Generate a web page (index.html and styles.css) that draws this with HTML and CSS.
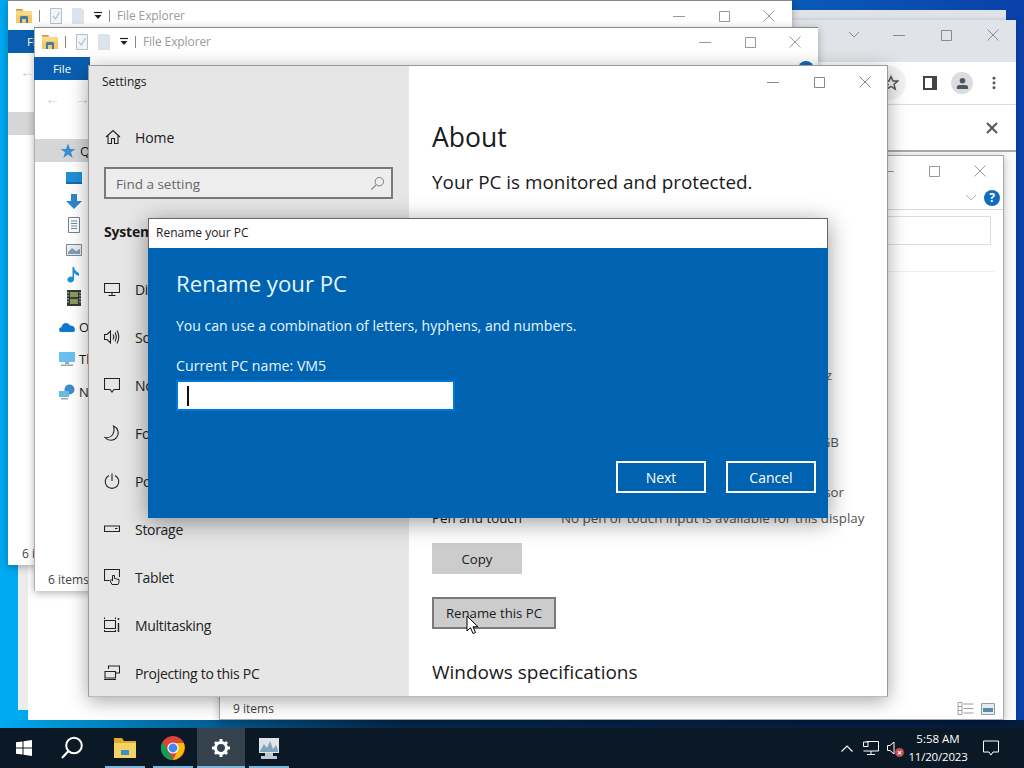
FILE: index.html
```html
<!DOCTYPE html>
<html lang="en">
<head>
<meta charset="utf-8">
<title>Rename your PC</title>
<link rel="stylesheet" href="styles.css">
</head>
<body>
<svg class="sprites" aria-hidden="true">
  <symbol id="i-min" viewBox="0 0 12 12"><path d="M0 6.500H12" fill="none" stroke="currentColor"/></symbol>
  <symbol id="i-max" viewBox="0 0 12 12"><path d="M1.500 1.500H11.500V11.500H1.500Z" fill="none" stroke="currentColor"/></symbol>
  <symbol id="i-close" viewBox="0 0 12 12"><path d="M.5.500L11.500 11.500M11.500.5L.5 11.500" fill="none" stroke="currentColor"/></symbol>
  <symbol id="i-folder" viewBox="0 0 16 16"><path d="M0 1H6L8 3H16V15H0Z" fill="#f3c969"/><path d="M0 1H6L7 2.500H0Z" fill="#c9994a"/><path d="M0 3H16V7H0Z" fill="#f7d98c"/><path d="M4 15V9.500Q4 8 5.500 8H10.500Q12 8 12 9.500V15H10V11H6V15Z" fill="#3f7aa8"/></symbol>
  <symbol id="i-doc" viewBox="0 0 12 16"><path d="M.5.500H11.500V15.500H.5Z" fill="#f2f5f8" stroke="#b7c0c9"/><path d="M3 8L5.500 11L9.500 4" fill="none" stroke="#b7c0c9" stroke-width="1.200"/></symbol>
  <symbol id="i-blank" viewBox="0 0 14 16"><path d="M0 0H10V1H12V16H0Z" fill="#dde3ea"/></symbol>
  <symbol id="i-drop" viewBox="0 0 10 10"><path d="M1 1.500H9" stroke="#222" stroke-width="1.200"/><path d="M1.500 4H8.500L5 8Z" fill="#222"/></symbol>
  <symbol id="i-home" viewBox="0 0 16 16"><path d="M1 8L8 1.500L15 8M3 6.500V14.500H6.500V9.500H9.500V14.500H13V6.500" fill="none" stroke="#222" stroke-width="1.100"/></symbol>
  <symbol id="i-display" viewBox="0 0 16 16"><path d="M.5 2.500H15.500V11.500H.5ZM8 11.500V14.500M4.500 14.500H11.500" fill="none" stroke="#222" stroke-width="1.100"/></symbol>
  <symbol id="i-sound" viewBox="0 0 16 16"><path d="M.5 5.500H3L6.500 2V14L3 10.500H.5ZM9 5.500Q10.500 8 9 10.500M11 3.500Q13.500 8 11 12.500M13 1.500Q16.500 8 13 14.500" fill="none" stroke="#222" stroke-width="1.100"/></symbol>
  <symbol id="i-notif" viewBox="0 0 16 16"><path d="M.5 1.500H15.500V12.500H10L8 15L6 12.500H.5Z" fill="none" stroke="#222" stroke-width="1.100"/></symbol>
  <symbol id="i-moon" viewBox="0 0 16 16"><path d="M9.500 1A7.400 7.400 0 1 1 1 12.500Q5.500 13.500 8.500 10Q11 6 9.500 1Z" fill="none" stroke="#222" stroke-width="1.100"/></symbol>
  <symbol id="i-power" viewBox="0 0 16 16"><path d="M5 2.500A6.800 6.800 0 1 0 11 2.500M8 .5V8" fill="none" stroke="#222" stroke-width="1.100"/></symbol>
  <symbol id="i-storage" viewBox="0 0 16 16"><path d="M.5 5H15.500V10.500H.5Z" fill="none" stroke="#222" stroke-width="1.200"/><path d="M11 7.500H13.500" stroke="#222"/></symbol>
  <symbol id="i-tablet" viewBox="0 0 16 16"><path d="M5.500 11.500H.5V.5H15.500V8" fill="none" stroke="#222" stroke-width="1.100"/><path d="M8 15.500L6 11.500L7 10.500L8.500 12V6.500H10.500V9.500L15 10.500V13.500L14 15.500Z" fill="#e6e6e6" stroke="#222"/></symbol>
  <symbol id="i-multi" viewBox="0 0 16 16"><path d="M.5 3.500H11.500V11.500H.5ZM.5.500V2M11.500.5V2M.5 13V15M11.500 13V15M.5 14.500H11.500" fill="none" stroke="#222" stroke-width="1.100"/><path d="M14.500 1V3M14.500 6V15" stroke="#222" stroke-width="1.400"/></symbol>
  <symbol id="i-project" viewBox="0 0 16 16"><path d="M4.500 4V1H15.500V8H12M1 6.500H11.500V13H1ZM0 14.500H12" fill="none" stroke="#222" stroke-width="1.100"/></symbol>
</svg>

<main class="desktop">
  <div class="win win-back-top"></div>
  <div class="win win-strip"></div>
  <div class="win win-white"></div>

  <!-- Chrome -->
  <section class="win chrome">
    <div class="chrome-title">
      <svg class="chev" viewBox="0 0 12 8"><path d="M1 1L6 6L11 1" fill="none" stroke="#8a8a8a"/></svg>
      <div class="ctrls ctrls-chrome">
        <svg><use href="#i-min"/></svg><svg><use href="#i-max"/></svg><svg><use href="#i-close"/></svg>
      </div>
    </div>
    <div class="chrome-bar">
      <span class="star-wrap"><svg viewBox="0 0 16 16"><path d="M8 1.500L10 6H14.800L11 9.200L12.300 14.200L8 11.500L3.700 14.200L5 9.200L1.200 6H6Z" fill="none" stroke="#555" stroke-width="1.400"/></svg></span>
      <svg class="panel" viewBox="0 0 14 14"><path d="M1 1H13V13H1Z" fill="none" stroke="#444" stroke-width="2"/><path d="M9 1H13V13H9Z" fill="#444"/></svg>
      <span class="avatar"><svg viewBox="0 0 14 14"><circle cx="7" cy="4" r="3" fill="#4c5560"/><path d="M1 13V11Q1 8.500 4 8.500H10Q13 8.500 13 11V13Z" fill="#4c5560"/></svg></span>
      <svg class="dots" viewBox="0 0 4 16"><circle cx="2" cy="2.500" r="1.700" fill="#555"/><circle cx="2" cy="8" r="1.700" fill="#555"/><circle cx="2" cy="13.500" r="1.700" fill="#555"/></svg>
    </div>
    <div class="chrome-row">
      <svg viewBox="0 0 12 12"><path d="M1 1L11 11M11 1L1 11" stroke="#555" stroke-width="2"/></svg>
    </div>
  </section>

  <!-- Explorer with nine items -->
  <section class="win nine">
    <div class="nine-title">
      <div class="ctrls ctrls-nine">
        <svg><use href="#i-min"/></svg><svg><use href="#i-max"/></svg><svg><use href="#i-close"/></svg>
      </div>
    </div>
    <div class="nine-tabs">
      <svg class="chev" viewBox="0 0 12 8"><path d="M1 1L6 6L11 1" fill="none" stroke="#aaa"/></svg>
      <span class="help">?</span>
    </div>
    <div class="nine-search"><span class="nine-field"></span></div>
    <div class="nine-body"></div>
    <footer class="nine-status">
      <span>9 items</span>
      <span class="views">
        <svg viewBox="0 0 16 14"><path d="M.5.500H4.500V4.500H.5ZM.5 4.500H4.500V8.500H.5ZM.5 8.500H4.500V12.500H.5ZM6 2H16M6 6.500H16M6 11H16" fill="none" stroke="#9aa0a6"/></svg>
        <svg viewBox="0 0 14 12"><path d="M.5.500H13.500V11.500H.5Z" fill="#e4ecf2" stroke="#8fa0ad"/><path d="M2 5H12V9H2Z" fill="#5d8aa6"/></svg>
      </span>
    </footer>
  </section>

  <!-- Explorer 1 -->
  <section class="win explorer ex-one">
    <header class="ex-title">
      <svg class="q-folder"><use href="#i-folder"/></svg><i class="sep"></i>
      <svg class="q-doc"><use href="#i-doc"/></svg>
      <svg class="q-blank"><use href="#i-blank"/></svg>
      <svg class="q-drop"><use href="#i-drop"/></svg><i class="sep"></i>
      <span class="ex-name">File Explorer</span>
      <div class="ctrls ctrls-ex">
        <svg><use href="#i-min"/></svg><svg><use href="#i-max"/></svg><svg><use href="#i-close"/></svg>
      </div>
    </header>
    <div class="ribbon"><span class="file-tab">File</span></div>
    <div class="ex-nav"><span class="arrow">←</span></div>
    <div class="ex-hl"></div>
    <footer class="ex-status">6 items</footer>
  </section>

  <!-- Explorer 2 -->
  <section class="win explorer ex-two">
    <header class="ex-title">
      <svg class="q-folder"><use href="#i-folder"/></svg><i class="sep"></i>
      <svg class="q-doc"><use href="#i-doc"/></svg>
      <svg class="q-blank"><use href="#i-blank"/></svg>
      <svg class="q-drop"><use href="#i-drop"/></svg><i class="sep"></i>
      <span class="ex-name">File Explorer</span>
      <div class="ctrls ctrls-ex">
        <svg><use href="#i-min"/></svg><svg><use href="#i-max"/></svg><svg><use href="#i-close"/></svg>
      </div>
    </header>
    <div class="ribbon"><span class="file-tab">File</span><span class="help help-two"></span></div>
    <div class="ex-nav"><span class="arrow">←</span><span class="arrow">→</span></div>
    <ul class="tree">
      <li class="tree-row tree-active"><svg class="t-star" viewBox="0 0 16 16"><path d="M8 .5L10 6H15.500L11 9.300L12.700 15L8 11.500L3.300 15L5 9.300L.5 6H6Z" fill="#3a8fd0"/></svg><span>Quick access</span></li>
      <li class="tree-sub t-1"><svg viewBox="0 0 16 14"><path d="M0 1H16V13H0Z" fill="#1f8fd8"/><path d="M0 11H16V13H0Z" fill="#156aa8"/></svg></li>
      <li class="tree-sub t-2"><svg viewBox="0 0 16 16"><path d="M5 0H11V7H16L8 15L0 7H5Z" fill="#2f86c8"/></svg></li>
      <li class="tree-sub t-3"><svg viewBox="0 0 12 16"><path d="M.5.500H11.500V15.500H.5Z" fill="#fff" stroke="#77808a"/><path d="M3 4H9M3 6.500H9M3 9H9M3 11.500H9" stroke="#5b8fb0"/></svg></li>
      <li class="tree-sub t-4"><svg viewBox="0 0 16 12"><path d="M.5.500H15.500V11.500H.5Z" fill="#e8eef3" stroke="#7c8a96"/><path d="M2 8L6 4L10 7L14 5V10H2Z" fill="#7e9db5"/></svg></li>
      <li class="tree-sub t-5"><svg viewBox="0 0 12 16"><path d="M4.500 0H6Q6.500 4 11 6V9Q8 8 6 6V12.500A3.300 3 0 1 1 4.500 10Z" fill="#1b8fe0"/></svg></li>
      <li class="tree-sub t-6"><svg viewBox="0 0 14 16"><path d="M0 0H14V16H0Z" fill="#33383d"/><path d="M3 2H11V14H3Z" fill="#8b9a55"/><path d="M3 7H11V9H3Z" fill="#384048"/><path d="M1 2V14M13 2V14" stroke="#ddd" stroke-dasharray="1.500 1.500"/></svg></li>
      <li class="tree-row t-od"><svg viewBox="0 0 16 10"><path d="M2 10Q0 10 0 7.500Q0 5.500 2.500 5Q3.500 1 7 1Q10 1 11 3.500Q15.500 3.500 16 7.500Q16 10 14 10Z" fill="#0f78d4"/></svg><span>OneDrive</span></li>
      <li class="tree-row t-pc"><svg viewBox="0 0 16 16"><path d="M0 1H16V11H0Z" fill="#6bc0ee"/><path d="M6 11H10V13H6ZM2 13.500H14V15H2Z" fill="#9aa6b0"/></svg><span>This PC</span></li>
      <li class="tree-row t-net"><svg viewBox="0 0 16 16"><circle cx="10.500" cy="5.500" r="5" fill="#3b8dc9"/><path d="M0 7H10V13H0Z" fill="#6bb7e6"/><path d="M2 14H9V15.500H2Z" fill="#9aa6b0"/></svg><span>Network</span></li>
    </ul>
    <footer class="ex-status">6 items</footer>
  </section>

  <!-- Settings -->
  <section class="win settings">
    <aside class="side">
      <div class="side-title">Settings</div>
      <a class="side-home"><svg class="nav-ico"><use href="#i-home"/></svg><span>Home</span></a>
      <div class="find"><span>Find a setting</span><svg viewBox="0 0 16 16"><circle cx="10" cy="6" r="4.500" fill="none" stroke="#777"/><path d="M6.500 9.500L1.500 14.500" stroke="#777" stroke-width="1.200"/></svg></div>
      <h3 class="side-head">System</h3>
      <nav class="side-list">
        <a><svg class="nav-ico"><use href="#i-display"/></svg><span>Display</span></a>
        <a><svg class="nav-ico"><use href="#i-sound"/></svg><span>Sound</span></a>
        <a><svg class="nav-ico"><use href="#i-notif"/></svg><span>Notifications</span></a>
        <a><svg class="nav-ico"><use href="#i-moon"/></svg><span>Focus assist</span></a>
        <a><svg class="nav-ico"><use href="#i-power"/></svg><span>Power &amp; sleep</span></a>
        <a><svg class="nav-ico"><use href="#i-storage"/></svg><span>Storage</span></a>
        <a><svg class="nav-ico"><use href="#i-tablet"/></svg><span>Tablet</span></a>
        <a><svg class="nav-ico"><use href="#i-multi"/></svg><span>Multitasking</span></a>
        <a><svg class="nav-ico"><use href="#i-project"/></svg><span>Projecting to this PC</span></a>
      </nav>
    </aside>
    <div class="about">
      <div class="ctrls ctrls-set">
        <svg><use href="#i-min"/></svg><svg><use href="#i-max"/></svg><svg><use href="#i-close"/></svg>
      </div>
      <h1>About</h1>
      <p class="protect">Your PC is monitored and protected.</p>
      <dl class="specs">
        <div class="spec s-cpu"><dd>2.50 GHz</dd></div>
        <div class="spec s-ram"><dd>8.00 GB</dd></div>
        <div class="spec s-type"><dd>x64-based processor</dd></div>
        <div class="spec s-pen"><dt>Pen and touch</dt><dd>No pen or touch input is available for this display</dd></div>
      </dl>
      <button class="btn btn-copy">Copy</button>
      <button class="btn btn-rename">Rename this PC</button>
      <h2>Windows specifications</h2>
    </div>
  </section>

  <!-- Dialog -->
  <section class="dialog">
    <header class="dlg-title">Rename your PC</header>
    <div class="dlg-body">
      <h2>Rename your PC</h2>
      <p class="dlg-help">You can use a combination of letters, hyphens, and numbers.</p>
      <p class="dlg-cur">Current PC name: VM5</p>
      <div class="dlg-input"><i class="caret"></i></div>
      <div class="dlg-btns"><button>Next</button><button>Cancel</button></div>
    </div>
  </section>

  <svg class="cursor" viewBox="0 0 13 20"><path d="M1 1V16L4.500 12.700L7 18.500L9.500 17.500L7 11.800H12Z" fill="#fff" stroke="#000"/></svg>
</main>

<footer class="taskbar">
  <svg class="tb-win" viewBox="0 0 16 16"><path d="M0 2.300L6.500 1.400V7.500H0ZM7.500 1.200L16 0V7.500H7.500ZM0 8.500H6.500V14.600L0 13.700ZM7.500 8.500H16V16L7.500 14.800Z" fill="#fff"/></svg>
  <svg class="tb-search" viewBox="0 0 24 24"><circle cx="14" cy="9.500" r="7.800" fill="none" stroke="#fff" stroke-width="2"/><path d="M8.500 15L2 22" stroke="#fff" stroke-width="2.200"/></svg>
  <span class="tb-app tb-on"><svg class="tb-folder" viewBox="0 0 22 20"><path d="M0 0H8L10 3H22V20H0Z" fill="#e0ab2e"/><path d="M0 5H22V20H0Z" fill="#f5d264"/><path d="M7 12H15V17H7Z" fill="#3f8dc9"/></svg></span>
  <span class="tb-app tb-on"><svg class="tb-chrome" viewBox="0 0 24 24"><circle cx="12" cy="12" r="12" fill="#db4437"/><path d="M12 24L17 14H22.800A12 12 0 0 1 12 24Z" fill="#fbbc05"/><path d="M12 7H22.800A12 12 0 0 1 17 22L12 12Z" fill="#fbbc05"/><path d="M1.600 6L7 15L12 24A12 12 0 0 1 1.600 6Z" fill="#0f9d58"/><circle cx="12" cy="12" r="5.600" fill="#fff"/><circle cx="12" cy="12" r="4.400" fill="#4285f4"/></svg></span>
  <span class="tb-app tb-on tb-active"><svg class="tb-gear" viewBox="0 0 18 18"><path d="M9 3.500A5.500 5.500 0 1 0 9 14.500A5.500 5.500 0 1 0 9 3.500Z" fill="none" stroke="#fff" stroke-width="3"/><path d="M7.500 0H10.500V3H7.500ZM7.500 15H10.500V18H7.500ZM0 7.500H3V10.500H0ZM15 7.500H18V10.500H15ZM2 4L4 2L6 4L4 6ZM12 14L14 12L16 14L14 16ZM14 2L16 4L14 6L12 4ZM4 12L6 14L4 16L2 14Z" fill="#fff"/></svg></span>
  <span class="tb-app tb-on"><svg class="tb-perf" viewBox="0 0 24 22"><path d="M2 1H22V16H2Z" fill="#dfe4e8"/><path d="M3 14L7 7L10 11L13 4L16 12L19 8L21 13V15H3Z" fill="#7fa4bd"/><path d="M8 16H16V19H20V22H4V19H8Z" fill="#c2c8cd"/></svg></span>
  <div class="tray">
    <svg class="tr-chev" viewBox="0 0 12 7"><path d="M.5 6.500L6 1L11.500 6.500" fill="none" stroke="#fff" stroke-width="1.200"/></svg>
    <svg class="tr-net" viewBox="0 0 16 16"><path d="M3.500 1.500H15.500V11H.5M8 11V14.500M4 14.500H12M.5 2H5V6.500H.5Z" fill="none" stroke="#fff"/></svg>
    <span class="tr-snd"><svg viewBox="0 0 16 16"><path d="M.5 5.500H3L7 2V14L3 10.500H.5Z" fill="none" stroke="#fff"/></svg><b>×</b></span>
    <div class="clock"><span>5:58 AM</span><span class="clock-date">11/20/2023</span></div>
    <svg class="tr-note" viewBox="0 0 16 16"><path d="M.5 1H15.500V12H10L8 15L6 12H.5Z" fill="none" stroke="#fff"/></svg>
  </div>
</footer>
</body>
</html>
```
FILE: styles.css
```css
* { box-sizing: border-box; }
html, body { margin: 0; height: 100%; overflow: hidden; }
body {
  font-family: "Open Sans", "Noto Sans", "Liberation Sans", sans-serif;
  color: #1a1a1a;
  display: flex;
  flex-direction: column;
  width: 1024px;
  height: 768px;
}
ul, dl, dd, h1, h2, h3, p { margin: 0; padding: 0; font-weight: 400; }
li { list-style: none; }
svg { display: block; flex: none; }
.sprites { position: absolute; width: 0; height: 0; }

.desktop {
  position: relative;
  height: 728px;
  background: linear-gradient(90deg, #00aaf2 0, #00a4ea 60px, #0a5cb8 780px, #0a40a8 1024px);
  overflow: hidden;
}
.desktop::after {
  content: "";
  position: absolute;
  left: 0; right: 0; bottom: 0;
  height: 8px;
  background: linear-gradient(90deg, rgba(0,0,0,0), rgba(4,24,50,.85) 400px, rgba(4,24,50,.9));
  z-index: 0;
}
.win { position: absolute; background: #fff; z-index: 1; }

.win-back-top { left: 780px; top: 10px; width: 226px; height: 60px; background: #dfe2e6; }
.win-strip { left: 18px; top: 500px; width: 40px; height: 210px; background: #ececec; }
.win-white { left: 28px; top: 500px; width: 300px; height: 220px; }

/* window controls */
.ctrls { display: flex; color: #888; }
.ctrls svg { width: 12px; height: 12px; }
.ctrls-set { position: absolute; right: 16px; top: 10px; gap: 34px; }
.ctrls-ex { margin-left: auto; margin-right: 17px; gap: 33px; color: #999; }
.ctrls-chrome { gap: 35px; color: #8a8a8a; }
.ctrls-nine { gap: 34px; color: #999; }

/* Chrome */
.chrome { left: 792px; top: 20px; width: 224px; height: 700px; background: #fafafa; box-shadow: 0 0 4px rgba(0,0,0,.2); }
.chrome-title { height: 42px; background: #e0e3e7; display: flex; align-items: center; justify-content: flex-end; padding: 0 17px 12px 0; }
.chrome-title .chev { width: 12px; height: 8px; margin-right: 33px; }
.chrome-bar { height: 43px; background: #fff; border-bottom: 1px solid #dadce0; display: flex; align-items: center; padding-left: 80px; }
.star-wrap { width: 34px; height: 34px; border-radius: 50%; background: #f1f3f4; display: flex; align-items: center; justify-content: center; }
.star-wrap svg { width: 16px; height: 16px; margin-left: 4px; }
.panel { width: 14px; height: 14px; margin-left: 17px; }
.avatar { width: 22px; height: 22px; border-radius: 50%; background: #dadce0; margin-left: 14px; display: flex; align-items: center; justify-content: center; }
.avatar svg { width: 13px; height: 13px; }
.dots { width: 4px; height: 14px; margin-left: 19px; }
.chrome-row { height: 47px; background: #fff; border-bottom: 2px solid #aaa; display: flex; align-items: center; justify-content: flex-end; padding-right: 18px; }
.chrome-row svg { width: 12px; height: 12px; }

/* Nine items explorer */
.nine { left: 219px; top: 155px; width: 785px; height: 565px; border: 1px solid #a8a8a8; box-shadow: 0 2px 8px rgba(0,0,0,.25); display: flex; flex-direction: column; }
.nine-title { height: 30px; flex: none; display: flex; align-items: center; justify-content: flex-end; padding-right: 17px; }
.nine-tabs { height: 24px; flex: none; border-bottom: 1px solid #d8d8d8; display: flex; align-items: center; justify-content: flex-end; padding: 0 3px 0 0; gap: 7px; }
.nine-tabs .chev { width: 12px; height: 8px; opacity: .9; }
.help { width: 16px; height: 16px; border-radius: 50%; background: #0f6cbd; color: #fff; font-size: 12px; font-weight: 700; line-height: 16px; text-align: center; }
.nine-search { height: 62px; flex: none; border-bottom: 1px solid #eee; padding: 6px 0 0 0; display: flex; justify-content: flex-end; margin-right: 8px; }
.nine-field { width: 400px; height: 29px; border: 1px solid #dcdcdc; margin-right: 4px; }
.nine-body { flex: 1; }
.nine-status { height: 24px; flex: none; display: flex; align-items: center; justify-content: space-between; padding: 3px 8px 0 13px; font-size: 12px; color: #444; }
.views { display: flex; gap: 7px; align-items: center; }
.views svg:first-child { width: 17px; height: 14px; }
.views svg:last-child { width: 14px; height: 12px; }

/* Explorers */
.explorer { width: 784px; height: 565px; border-top: 1px solid #888; box-shadow: 0 2px 8px rgba(0,0,0,.3); }
.ex-one { left: 8px; top: 0; height: 565px; }
.ex-two { left: 34px; top: 27px; height: 564px; border-left: 1px solid #b0b0b0; }
.ex-title { height: 29px; display: flex; align-items: center; padding-left: 8px; }
.ex-two .ex-title { padding-left: 7px; padding-bottom: 2px; }
.q-folder { width: 16px; height: 16px; }
.sep { width: 1px; height: 12px; background: #888; margin: 0 10px 0 7px; }
.q-doc { width: 12px; height: 16px; }
.q-blank { width: 14px; height: 16px; margin-left: 10px; }
.q-drop { width: 10px; height: 10px; margin-left: 7px; }
.q-drop + .sep { margin: 0 7px 0 6px; }
.ex-name { font-size: 12px; color: #9a9a9a; letter-spacing: -.1px; }
.ribbon { height: 24px; position: relative; background: #fff; }
.file-tab { display: block; width: 56px; height: 23px; background: #0a5eb0; color: #fff; font-size: 11.500px; line-height: 23px; text-align: center; }
.ex-two .file-tab { margin-left: -1px; }
.help-two { display: block; position: absolute; right: 4px; top: 4px; }
.ex-nav { height: 33px; display: flex; align-items: center; gap: 15px; padding-left: 10px; color: #cfcfcf; font-size: 15px; }
.ex-one .ex-nav { padding-left: 12px; }
.ex-hl { height: 23px; background: #d6d6d6; margin-top: 25px; width: 30px; }
.ex-status { position: absolute; left: 14px; bottom: 3px; font-size: 12px; color: #444; }
.ex-two .ex-status { left: 13px; }
.tree { position: relative; }
.tree-row { display: flex; align-items: center; gap: 4px; font-size: 13px; height: 23px; }
.tree-row svg { width: 16px; height: 16px; }
.tree-active { margin-top: 25px; background: #d6d6d6; padding-left: 25px; }
.tree-sub { position: absolute; left: 31px; }
.tree-sub svg { width: 16px; height: 16px; }
.t-1 { top: 31px; } .t-2 { top: 55px; } .t-3 { top: 78px; } .t-4 { top: 103px; } .t-5 { top: 128px; } .t-6 { top: 151px; }
.t-od, .t-pc, .t-net { position: absolute; left: 24px; }
.t-od { top: 176px; } .t-pc { top: 208px; } .t-net { top: 241px; }

/* Settings */
.settings { left: 88px; top: 65px; width: 800px; height: 632px; display: flex; border: 1px solid #9a9a9a; border-bottom-color: #bbb; box-shadow: 0 4px 18px rgba(0,0,0,.35); overflow: hidden; z-index: 2; }
.explorer, .nine, .chrome { z-index: 1; }
.side { width: 320px; background: #e6e6e6; padding: 0 16px 0 15px; flex: none; }
.side-title { font-size: 12px; height: 32px; line-height: 32px; margin-left: -2px; }
.side-home { height: 48px; display: flex; align-items: center; gap: 14px; font-size: 14px; letter-spacing: -.1px; margin: 15px 0 0 1px; }
.nav-ico { width: 16px; height: 16px; }
.find { height: 32px; margin-top: 6px; padding: 1px 6px 0 10px; border: 2px solid #7a7a7a; background: #ededed; display: flex; align-items: center; justify-content: space-between; font-size: 13.500px; color: #666; }
.find svg { width: 15px; height: 15px; }
.side-head { font-size: 14px; font-weight: 700; margin-top: 21px; line-height: 24px; letter-spacing: -.2px; }
.side-list { margin-top: 21px; }
.side-list a { height: 48px; display: flex; align-items: center; gap: 15px; font-size: 14px; letter-spacing: -.3px; white-space: nowrap; color: #222; }
.about { position: relative; flex: 1; padding: 54px 0 0 23px; }
.about h1 { font-size: 26.500px; line-height: 34px; }
.protect { font-size: 18.900px; line-height: 26px; margin-top: 15px; }
.specs { position: absolute; left: 23px; top: 0; width: 440px; font-size: 13.350px; }
.spec { position: absolute; left: 0; display: flex; white-space: nowrap; }
.spec dt { width: 129px; flex: none; }
.spec dd { color: #555; }
.s-cpu dd, .s-ram dd, .s-type dd { margin-left: 129px; text-align: right; }
.s-cpu dd { width: 271px; }
.s-ram dd { width: 278px; }
.s-type dd { width: 283px; }
.s-cpu { top: 300px; } .s-ram { top: 367px; } .s-type { top: 417px; } .s-pen { top: 443px; }
.btn { display: block; position: absolute; left: 23px; height: 31px; background: #ccc; border: 0; font: inherit; font-size: 13.200px; color: #1a1a1a; padding: 0; }
.btn-copy { top: 477px; width: 90px; }
.btn-rename { top: 531px; width: 124px; border: 2px solid #7a7a7a; height: 32px; }
.about h2 { position: absolute; left: 23px; top: 593px; font-size: 19px; line-height: 26px; white-space: nowrap; }

/* Dialog */
.dialog { position: absolute; left: 148px; top: 218px; width: 680px; height: 300px; z-index: 3; box-shadow: 0 4px 22px rgba(0,0,0,.4); border: 1px solid #666; border-bottom: 0; display: flex; flex-direction: column; }
.dlg-title { height: 29px; flex: none; background: #fff; font-size: 12px; line-height: 28px; padding-left: 7px; }
.dlg-body { flex: 1; background: #0063b1; color: #e8f6ff; padding: 19px 12px 0 28px; margin: 0 -1px; }
.dlg-body h2 { font-size: 22.200px; line-height: 34px; }
.dlg-help { font-size: 14.060px; line-height: 20px; margin-top: 15px; }
.dlg-cur { font-size: 14.200px; line-height: 20px; margin-top: 20px; }
.dlg-input { width: 279px; height: 31px; margin-top: 4px; background: #fff; border: 2px solid #0078d7; display: flex; align-items: center; padding-left: 9px; }
.caret { width: 1.500px; height: 20px; background: #111; }
.dlg-btns { display: flex; justify-content: flex-end; gap: 20px; margin-top: 50px; }
.dlg-btns button { width: 90px; height: 32px; background: #0063b1; color: #fff; border: 2px solid #fff; font: inherit; font-size: 14px; padding: 0; }

.cursor { position: absolute; left: 466px; top: 615px; width: 13px; height: 20px; z-index: 4; }

/* Taskbar */
.taskbar { height: 40px; flex: none; background: #0b1926; display: flex; align-items: center; position: relative; }
.tb-win { width: 16px; height: 16px; margin-left: 16px; }
.tb-search { width: 24px; height: 24px; margin-left: 28px; margin-right: 17px; }
.tb-app { position: relative; width: 48px; height: 40px; display: flex; align-items: center; justify-content: center; }
.tb-on::after { content: ""; position: absolute; left: 4px; right: 4px; bottom: 0; height: 2px; background: #7fb6dc; }
.tb-active { background: #35424e; }
.tb-active::after { left: 0; right: 0; }
.tb-folder { width: 22px; height: 20px; }
.tb-chrome { width: 24px; height: 24px; }
.tb-gear { width: 18px; height: 18px; }
.tb-perf { width: 24px; height: 22px; }
.tray { margin-left: auto; display: flex; align-items: center; color: #fff; }
.tr-chev { width: 12px; height: 7px; margin-right: 10px; }
.tr-net { width: 16px; height: 16px; margin-right: 8px; }
.tr-snd { position: relative; width: 16px; height: 16px; }
.tr-snd svg { width: 16px; height: 16px; }
.tr-snd b { position: absolute; right: -1px; bottom: -1px; width: 9px; height: 9px; border-radius: 50%; background: #c84a4a; font-size: 9px; line-height: 9px; text-align: center; }
.clock { display: flex; flex-direction: column; align-items: center; font-size: 11.500px; line-height: 18px; margin: 0 14px 0 4px; width: 62px; }
.clock-date { letter-spacing: -.2px; }
.tr-note { width: 16px; height: 16px; margin-right: 25px; }
```
